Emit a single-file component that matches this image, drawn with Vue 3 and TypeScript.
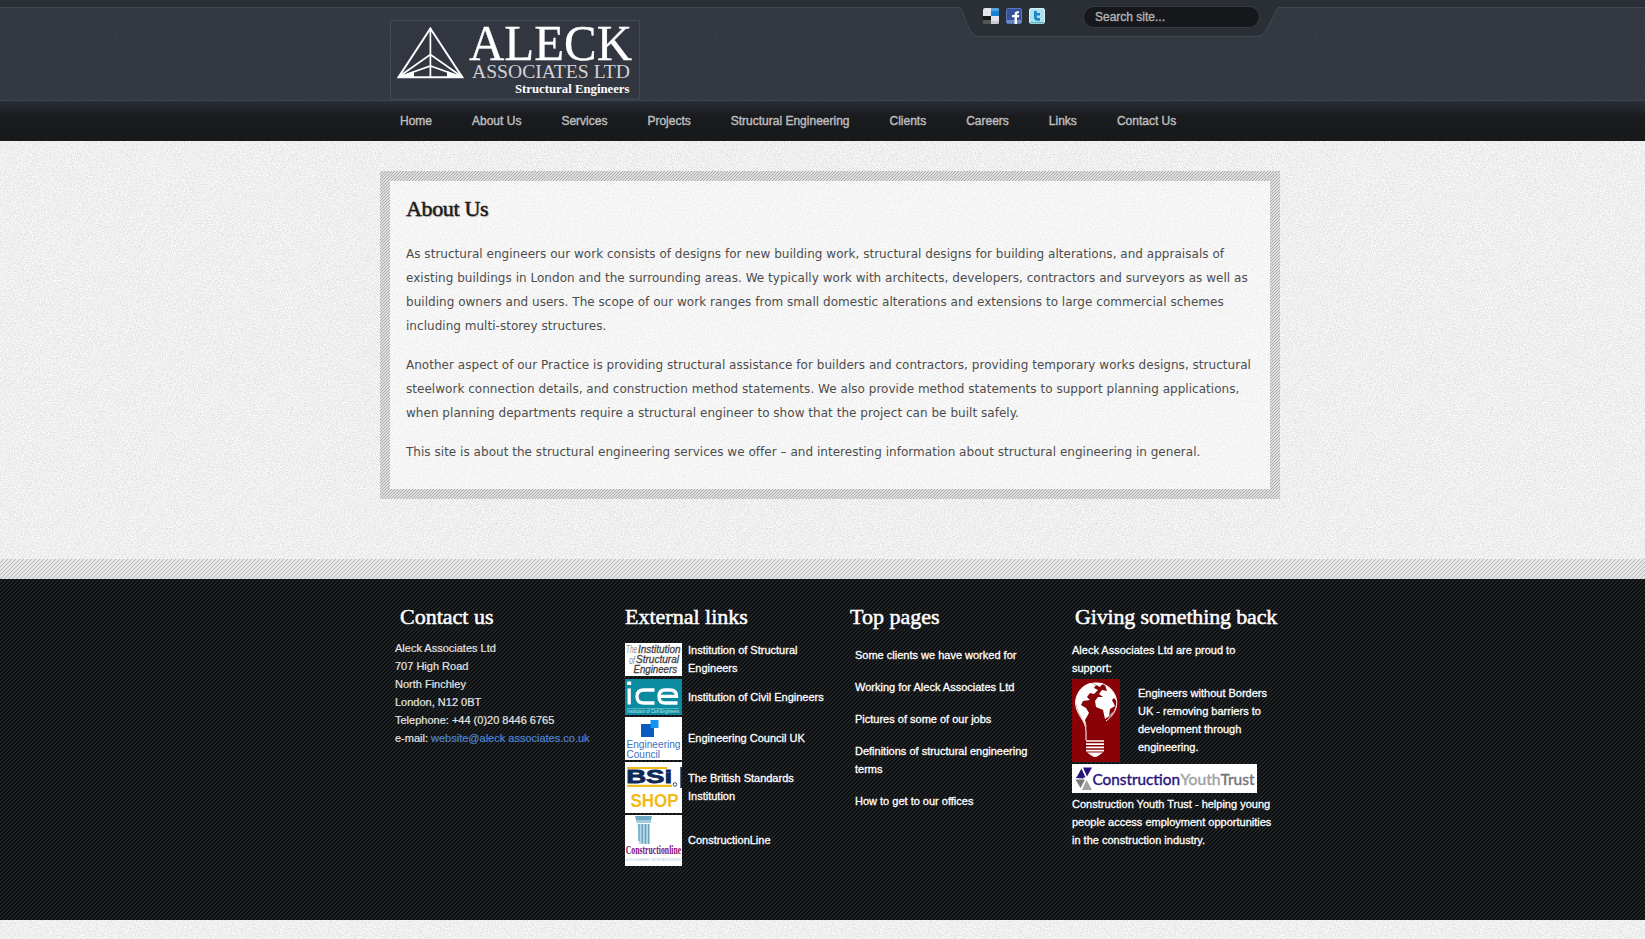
<script setup lang="ts">
const nav: string[] = [
  'Home', 'About Us', 'Services', 'Projects', 'Structural Engineering',
  'Clients', 'Careers', 'Links', 'Contact Us',
]

const paragraphs: string[][] = [
  [
    'As structural engineers our work consists of designs for new building work, structural designs for building alterations, and appraisals of',
    'existing buildings in London and the surrounding areas. We typically work with architects, developers, contractors and surveyors as well as',
    'building owners and users. The scope of our work ranges from small domestic alterations and extensions to large commercial schemes',
    'including multi-storey structures.',
  ],
  [
    'Another aspect of our Practice is providing structural assistance for builders and contractors, providing temporary works designs, structural',
    'steelwork connection details, and construction method statements. We also provide method statements to support planning applications,',
    'when planning departments require a structural engineer to show that the project can be built safely.',
  ],
  [
    'This site is about the structural engineering services we offer – and interesting information about structural engineering in general.',
  ],
]

const contact: string[] = [
  'Aleck Associates Ltd',
  '707 High Road',
  'North Finchley',
  'London, N12 0BT',
  'Telephone: +44 (0)20 8446 6765',
]

const topPages: string[] = [
  'Some clients we have worked for',
  'Working for Aleck Associates Ltd',
  'Pictures of some of our jobs',
  'Definitions of structural engineering terms',
  'How to get to our offices',
]
</script>

<template>
  <div class="page">
    <header class="header">
      <svg class="tab" width="320" height="38" viewBox="0 0 320 38">
        <path d="M0 0H320V7.5H318C312 17 311 22 306 30Q302 36.5 298 36.5H18Q14 36.500 10 30C6 23 5 16 .5 7.500H0Z" fill="#2a2e35" />
        <path d="M0 7.500H.5C5 16 6 23 10 30Q14 36.500 19 36.500H298Q302 36.500 306 30C311 22 313 16 318 7.500H320" fill="none" stroke="#424752" />
      </svg>
      <div class="wrap head-row">
        <svg class="logo" width="250" height="80" viewBox="390 20 250 80">
          <rect x="390.5" y="20.500" width="249" height="78.500" fill="#30343e" fill-opacity=".35" stroke="#444954" />
          <g stroke="#fff" fill="none" stroke-width="1.700">
            <path d="M430.400 28.500L398.500 77.200H462.300Z" stroke-width="2" />
            <path d="M430.400 28V77M398.500 77L430.400 54.500L462.300 77M398.500 77.200L430.400 66L462.300 77.200" />
            <path d="M399 77L414 71V77ZM462 77L447 71V77Z" fill="#fff" stroke="none" />
          </g>
          <text class="logo-serif" x="469" y="59.500" font-size="50" textLength="163" lengthAdjust="spacingAndGlyphs">ALECK</text>
          <text class="logo-serif thin" x="472" y="77.700" font-size="19" textLength="158" lengthAdjust="spacingAndGlyphs">ASSOCIATES LTD</text>
          <text class="logo-serif strong" x="515" y="92.500" font-size="12.500" textLength="114.500" lengthAdjust="spacingAndGlyphs">Structural Engineers</text>
        </svg>
        <div class="tools">
          <svg width="16" height="16" viewBox="0 0 16 16">
            <rect width="16" height="16" rx="2" fill="#e2e6e8" />
            <path d="M8 0H14Q16 0 16 2V8H8Z" fill="#1b82d0" />
            <path d="M8 0H14Q16 0 16 2V3H8Z" fill="#4fa5e2" />
            <path d="M0 8H8V16H2Q0 16 0 14Z" fill="#18191b" />
            <path d="M0 12H8V16H2Q0 16 0 14Z" fill="#55585b" />
            <path d="M8 13H16V14Q16 16 14 16H8Z" fill="#c9cccf" />
          </svg>
          <svg width="16" height="16" viewBox="0 0 16 16">
            <rect x=".5" y=".5" width="15" height="15" rx="1.500" fill="#34539a" stroke="#5877b7" />
            <path d="M1 12H15V15H1Z" fill="#6d89c4" />
            <path d="M13 3.200H11.600C9.600 3.200 8.600 4.400 8.600 6V7H6V9.300H8.600V16H11V9.300H13L13.200 7H11V6Q11 5.300 11.800 5.300H13Z" fill="#fff" />
          </svg>
          <svg width="16" height="16" viewBox="0 0 16 16">
            <rect x=".5" y=".5" width="15" height="15" rx="1.500" fill="#aee0ef" stroke="#d3f0f6" />
            <path d="M1 14H15V15.500H1Z" fill="#5fb3c8" />
            <path d="M5 3H7.800V5H11V7.500H7.800V9Q7.800 10 9 10H11V12.700H8.500Q5 12.700 5 9.300Z" fill="#1a86c8" />
          </svg>
          <input class="search" type="text" value="Search site..." aria-label="Search site" />
        </div>
      </div>
    </header>

    <nav class="nav">
      <div class="wrap nav-row">
        <a v-for="item in nav" :key="item">{{ item }}</a>
      </div>
    </nav>

    <main class="main">
      <section class="panel">
        <div class="panel-inner">
          <h1>About Us</h1>
          <p v-for="(para, i) in paragraphs" :key="i">
            <span v-for="line in para" :key="line" class="line">{{ line }}</span>
          </p>
        </div>
      </section>
    </main>

    <footer class="footer">
      <div class="wrap columns">
        <section class="col contact">
          <h2>Contact us</h2>
          <div v-for="l in contact" :key="l">{{ l }}</div>
          <div>e-mail: <a class="mail">website@aleck associates.co.uk</a></div>
        </section>

        <section class="col links">
          <h2>External links</h2>
          <div class="link-row r1">
            <svg width="57" height="33" viewBox="0 0 57 33">
              <rect width="57" height="33" fill="#fff" />
              <g font-family="Liberation Sans Narrow, Liberation Sans" font-style="italic" font-size="11" fill="#3f4044">
                <text x="1" y="10.300" font-size="10.500" fill="#8b8c90" textLength="11" lengthAdjust="spacingAndGlyphs">The</text>
                <text class="semi" x="13" y="10.300" textLength="42.500" lengthAdjust="spacingAndGlyphs">Institution</text>
                <text x="4" y="20.600" font-size="10.500" fill="#8b8c90" textLength="6" lengthAdjust="spacingAndGlyphs">of</text>
                <text class="semi" x="11" y="20.300" textLength="43" lengthAdjust="spacingAndGlyphs">Structural</text>
                <text class="semi" x="8.500" y="30.200" textLength="43.500" lengthAdjust="spacingAndGlyphs">Engineers</text>
              </g>
            </svg>
            <span>Institution of Structural<br />Engineers</span>
          </div>
          <div class="link-row r2">
            <svg width="57" height="36" viewBox="0 0 57 36">
              <rect width="57" height="36" fill="#0b8ba0" />
              <rect x="2.200" y="2.500" width="4" height="3.500" fill="#fff" />
              <g fill="none" stroke="#fff" stroke-width="3.300">
                <path d="M4.200 9.500V25.500" />
                <path d="M29.500 11H19Q12 11 12 17.500T19 24H29.500" />
                <path d="M34.500 17.300H51.500Q51.500 11 45 11H40Q34 11 34 17.500T40 24H52.500" />
              </g>
              <path d="M2 29.500H54" stroke="#75c2cd" stroke-width=".7" />
              <text x="2" y="34" font-family="Liberation Sans" font-size="4.500" fill="#c9eaee" textLength="52" lengthAdjust="spacingAndGlyphs">Institution of Civil Engineers</text>
            </svg>
            <span>Institution of Civil Engineers</span>
          </div>
          <div class="link-row r3">
            <svg width="57" height="43" viewBox="0 0 57 43">
              <rect width="57" height="43" fill="#fff" />
              <rect x="16" y="7" width="13" height="13" fill="#0a5bc0" />
              <rect x="25.500" y="3" width="8" height="8" fill="#1595f3" />
              <g font-family="Liberation Sans" font-size="11" fill="#3a72c0">
                <text x="1.500" y="31" textLength="54" lengthAdjust="spacingAndGlyphs">Engineering</text>
                <text x="1.500" y="40.700" textLength="33.500" lengthAdjust="spacingAndGlyphs">Council</text>
              </g>
            </svg>
            <span>Engineering Council UK</span>
          </div>
          <div class="link-row r4">
            <svg width="57" height="51" viewBox="0 0 57 51">
              <rect width="57" height="51" fill="#fff" />
              <rect x="55.300" y="5" width="1.700" height="21" fill="#0e2857" />
              <path d="M2 6H42" stroke="#f2bc1c" stroke-width="2" />
              <path d="M2 23.900H47" stroke="#f2bc1c" stroke-width="2.200" />
              <text x="1.200" y="21.400" font-family="Liberation Sans" font-weight="bold" font-size="19" fill="#0e2857" stroke="#0e2857" stroke-width=".8" textLength="46" lengthAdjust="spacingAndGlyphs">BSi</text>
              <circle cx="50" cy="22.500" r="1.800" fill="none" stroke="#0e2857" stroke-width=".8" />
              <text x="5.500" y="45.100" font-family="Liberation Sans" font-weight="bold" font-size="18" fill="#f1b91a" textLength="48" lengthAdjust="spacingAndGlyphs">SHOP</text>
            </svg>
            <span>The British Standards<br />Institution</span>
          </div>
          <div class="link-row r5">
            <svg width="57" height="51" viewBox="0 0 57 51">
              <rect width="57" height="51" fill="#fff" />
              <path d="M10 1H27L26 5H11Z" fill="#6caac4" />
              <path d="M11 5H26V8H12Z" fill="#9fcbdd" />
              <path d="M12.500 9H24.500V29H14Z" fill="#b5d7e4" />
              <path d="M14 9V26M17.300 9V28M20.500 9V29M23.700 9V29" stroke="#63a2bf" stroke-width="1.300" />
              <text x=".7" y="38.700" font-family="Liberation Serif" font-weight="bold" font-size="12" fill="#84106f" textLength="55.500" lengthAdjust="spacingAndGlyphs">Constructionline</text>
              <text x="1" y="45.500" font-family="Liberation Sans" font-size="4" fill="#9fc8d8" textLength="55" lengthAdjust="spacingAndGlyphs">A UK GOVERNMENT CERTIFICATION SERVICE</text>
            </svg>
            <span>ConstructionLine</span>
          </div>
        </section>

        <section class="col top">
          <h2>Top pages</h2>
          <ul>
            <li v-for="t in topPages" :key="t">{{ t }}</li>
          </ul>
        </section>

        <section class="col giving">
          <h2>Giving something back</h2>
          <p>Aleck Associates Ltd are proud to<br />support:</p>
          <div class="ewb">
            <svg width="48" height="83" viewBox="0 0 48 83">
              <rect width="48" height="83" fill="#8a0207" />
              <path d="M14 61V52C14 41 3.500 36 3.500 23A20.700 20.500 0 0 1 44.800 23C44.800 33 39 38 34 42" fill="none" stroke="#fff" stroke-width="1" />
              <path d="M5 16C8 9 13 5 19 4L24 6L22 9L26 11L22 15L18 14L15 18L18 21L11 22L9 26L14 29L17 34L13 41L15 49L13 45L7 34C4 28 3 22 5 16Z" fill="#fff" />
              <path d="M21 4H31L28 8L24 6ZM33 6C40 9 44 16 44.500 22L42 19L40 21L43 27L38 30L37 37L33 40L31 31L24 28L23 22L26 18L31 18L27 15L30 11L35 12Z" fill="#fff" />
              <path d="M35 39C41 36 44 30 44.500 25L42 32L36 38Z" fill="#fff" />
              <path d="M14 62H32M14 65.200H32M14 68.400H32M14 71.600H32" stroke="#fff" stroke-width="1.700" />
              <path d="M15 73.500H31L26 77Q23 79 20 77Z" fill="#fff" />
            </svg>
            <span>Engineers without Borders<br />UK - removing barriers to<br />development through<br />engineering.</span>
          </div>
          <svg class="cyt" width="185" height="29" viewBox="0 0 185 29">
            <rect width="185" height="29" fill="#fff" />
            <path d="M9.500 4.500L13.500 13.500H4.500ZM11 3.500H20L15 12.500ZM3.500 14L8 10L12 14.500Z" fill="#281282" />
            <path d="M3.500 15.500H13L8.500 24Z" fill="#77787b" />
            <path d="M14.500 16L20 26H10Z" fill="#a2a3a6" />
            <g font-family="Lato, Noto Sans" font-size="15.500">
              <text class="cyt-word" x="20.500" y="20.800" fill="#281282" stroke="#281282" textLength="87.500" lengthAdjust="spacingAndGlyphs">Construction</text>
              <text class="cyt-word" x="108.500" y="20.800" fill="#a0a1a3" stroke="#a0a1a3" textLength="40" lengthAdjust="spacingAndGlyphs">Youth</text>
              <text class="cyt-word" x="148.500" y="20.800" fill="#737477" stroke="#737477" textLength="34" lengthAdjust="spacingAndGlyphs">Trust</text>
            </g>
          </svg>
          <p>Construction Youth Trust - helping young<br />people access employment opportunities<br />in the construction industry.</p>
        </section>
      </div>
    </footer>
  </div>
</template>

<style>
body {
  margin: 0;
  overflow: hidden;
}
</style>

<style scoped>
.page {
  --grain: url("data:image/svg+xml,%3Csvg xmlns='http://www.w3.org/2000/svg' width='300' height='300'%3E%3Cfilter id='n' x='0' y='0' width='100%25' height='100%25' color-interpolation-filters='sRGB'%3E%3CfeTurbulence type='fractalNoise' baseFrequency='.77' numOctaves='3' stitchTiles='stitch'/%3E%3CfeColorMatrix values='0 0 0 0 0 0 0 0 0 0 0 0 0 0 0 .2 0 0 0 -.045'/%3E%3C/filter%3E%3Crect width='300' height='300' filter='url(%23n)'/%3E%3C/svg%3E");
  height: 939px;
  overflow: hidden;
  background: var(--grain) #fdfdfd;
  font-family: "Liberation Sans", Arial, sans-serif;
}
.wrap {
  width: 900px;
  margin-left: 380px;
}
.header {
  position: relative;
  height: 100px;
  background:
    linear-gradient(#2a2e35 7px, #424752 7px, #424752 8px, transparent 8px),
    var(--grain) #373c45;
  border-bottom: 1px solid #3e4450;
}
.tab {
  position: absolute;
  left: 960px;
  top: 0;
}
.head-row {
  position: relative;
  display: flex;
  align-items: flex-start;
  padding-left: 10px;
  box-sizing: border-box;
}
.logo {
  margin-top: 20px;
  overflow: visible;
}
.logo-serif {
  font-family: "Liberation Serif", "Times New Roman", serif;
  fill: #fff;
  stroke: #fff;
  stroke-width: .3px;
}
.logo-serif.thin {
  stroke: none;
  fill: #d2d3d7;
}
.logo-serif.strong {
  font-weight: bold;
  stroke: none;
}
.tools {
  display: flex;
  gap: 7px;
  margin-left: 343px;
  padding-top: 6px;
}
.tools svg {
  margin-top: 2px;
}
.search {
  box-sizing: border-box;
  width: 177px;
  height: 22px;
  margin-left: 31px;
  padding: 0 11px;
  border: 1px solid #363b45;
  border-radius: 11px;
  background: #17181b;
  color: #b4b5b6;
  font: 12px "Liberation Sans", Arial, sans-serif;
  -webkit-text-stroke: .35px #b4b5b6;
}
.nav {
  height: 40px;
  background: linear-gradient(#2a2e37 0, #1a1b1e 15px, #18191b 100%);
}
.nav-row {
  display: flex;
  gap: 40px;
  padding-left: 20px;
  box-sizing: border-box;
  white-space: nowrap;
  font-size: 12px;
  line-height: 41px;
  color: #bdbebf;
  -webkit-text-stroke: .4px #bdbebf;
}
.main {
  height: 388px;
  padding: 30px 0 0 380px;
}
.panel {
  width: 900px;
  height: 328px;
  padding: 10px;
  box-sizing: border-box;
  background: url("data:image/svg+xml,%3Csvg xmlns='http://www.w3.org/2000/svg' width='3' height='3' shape-rendering='crispEdges'%3E%3Cpath fill='%23dedede' d='M0 0h3v3H0z'/%3E%3Cpath fill='%23adadad' d='M2 0h1v1H2zM1 1h1v1H1zM0 2h1v1H0z'/%3E%3C/svg%3E");
}
.panel-inner {
  height: 308px;
  padding: 15px 16px 0;
  box-sizing: border-box;
  background: linear-gradient(rgba(255, 255, 255, .4), rgba(255, 255, 255, .4)), var(--grain) #fdfdfd;
}
h1, h2 {
  margin: 0;
  font-family: Georgia, "Liberation Serif", serif;
  font-weight: normal;
  font-size: 22px;
  line-height: 26px;
  white-space: nowrap;
}
h1 {
  color: #1b1b1b;
  -webkit-text-stroke: .5px #1b1b1b;
  letter-spacing: -.35px;
  text-shadow: 1px 1px 1px #bbb;
  margin-bottom: 20px;
}
.panel p {
  margin: 0 0 15px;
  font-family: "DejaVu Sans", Verdana, sans-serif;
  font-size: 12px;
  line-height: 24px;
  letter-spacing: .03px;
  color: #4d4d4d;
}
.line {
  display: block;
  white-space: nowrap;
}
.footer {
  height: 341px;
  border-top: 20px solid transparent;
  background:
    url("data:image/svg+xml,%3Csvg xmlns='http://www.w3.org/2000/svg' width='4' height='4' shape-rendering='crispEdges'%3E%3Cpath fill='%230a0c0e' d='M0 0h4v4H0z'/%3E%3Cpath fill='%23222527' d='M2 0h2v1H2zM1 1h2v1H1zM0 2h2v1H0zM0 3h1v1H0zM3 3h1v1H3z'/%3E%3C/svg%3E") padding-box,
    url("data:image/svg+xml,%3Csvg xmlns='http://www.w3.org/2000/svg' width='4' height='4' shape-rendering='crispEdges'%3E%3Cpath fill='%23e6e6e6' d='M0 0h4v4H0z'/%3E%3Cpath fill='%23b8b8b8' d='M3 0h1v1H3zM2 1h1v1H2zM1 2h1v1H1zM0 3h1v1H0z'/%3E%3C/svg%3E") border-box;
}
.columns {
  display: grid;
  grid-template-columns: repeat(4, 225px);
  padding-top: 24px;
  font-size: 11px;
  line-height: 18px;
  color: #fff;
  white-space: nowrap;
}
.col {
  -webkit-text-stroke: .3px #fff;
}
.col svg {
  -webkit-text-stroke: 0;
}
h2 {
  height: 38px;
  line-height: 28px;
  color: #fff;
  -webkit-text-stroke: .5px #fff;
}
.contact {
  padding-left: 15px;
  color: #e4e4e4;
  -webkit-text-stroke: .2px #e4e4e4;
}
.contact h2 {
  padding-left: 5px;
}
.contact h2 + div {
  margin-top: -2px;
}
.mail {
  color: #4c84d2;
  -webkit-text-stroke: .2px #4c84d2;
}
.links {
  padding-left: 20px;
}
.link-row {
  display: flex;
  align-items: center;
  gap: 6px;
  margin-bottom: 2px;
}
.link-row svg {
  flex: none;
  overflow: visible;
}
.r1, .r2 {
  height: 36px;
}
.r3 {
  height: 43px;
}
.r4, .r5 {
  height: 51px;
}
.r3 span, .r4 span, .r5 span {
  padding-bottom: 2px;
}
.top {
  padding-left: 20px;
}
.top ul {
  list-style: none;
  width: 185px;
  margin: 5px 0 0;
  padding: 0 0 0 5px;
  white-space: normal;
}
.top li {
  margin-bottom: 14px;
}
.giving {
  padding-left: 17px;
}
.giving h2 {
  padding-left: 3px;
  letter-spacing: -.15px;
}
.giving p {
  margin: 0;
}
.ewb {
  display: flex;
  gap: 18px;
  margin: 2px 0;
}
.ewb span {
  padding-top: 5px;
}
.cyt {
  display: block;
  margin-bottom: 2px;
}
.semi {
  stroke: #3f4044;
  stroke-width: .3px;
}
.cyt-word {
  stroke-width: .4px;
}
</style>
